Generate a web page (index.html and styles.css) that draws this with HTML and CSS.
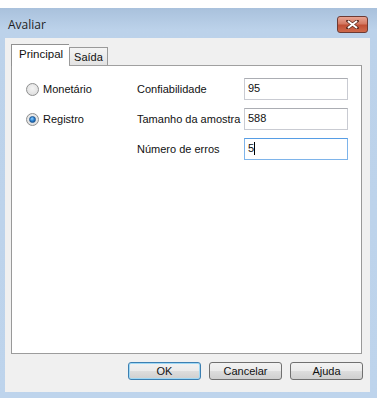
FILE: index.html
```html
<!DOCTYPE html>
<html>
<head>
<meta charset="utf-8">
<link rel="stylesheet" href="styles.css">
</head>
<body>
<div class="window">
  <div class="titlebar">
    <span class="title">Avaliar</span>
    <span class="close"><svg width="13" height="9" viewBox="0 0 13 9"><path d="M2 1 L11 8 M11 1 L2 8" stroke="#5a2a20" stroke-width="3.4" stroke-linecap="square"/><path d="M2 1 L11 8 M11 1 L2 8" stroke="#fff" stroke-width="2"/></svg></span>
  </div>
  <div class="client">
    <div class="tabs">
      <div class="tab active">Principal</div>
      <div class="tab">Saída</div>
    </div>
    <div class="panel">
      <div class="grid">
        <label class="radio"><span class="dot"></span>Monetário</label>
        <span class="lbl">Confiabilidade</span>
        <span class="field">95</span>

        <label class="radio"><span class="dot on"></span>Registro</label>
        <span class="lbl">Tamanho da amostra</span>
        <span class="field">588</span>

        <span></span>
        <span class="lbl">Número de erros</span>
        <span class="field focus"><span class="caret">5</span></span>
      </div>
    </div>
    <div class="buttons">
      <span class="btn default">OK</span>
      <span class="btn">Cancelar</span>
      <span class="btn">Ajuda</span>
    </div>
  </div>
</div>
</body>
</html>
```

FILE: styles.css
```css
html, body {
  margin: 0;
  padding: 0;
  background: #ffffff;
}
body {
  padding-top: 8px;
  font-family: "Liberation Sans", Arial, sans-serif;
  font-size: 11px;
  color: #111;
}
.window {
  width: 377px;
  height: 390px;
  box-sizing: border-box;
  background: linear-gradient(to bottom, #a9c1dc 0px, #bcd2ea 22px, #bed4ec 100%);
  display: flex;
  flex-direction: column;
}
.titlebar {
  height: 30px;
  display: flex;
  align-items: center;
  justify-content: space-between;
  padding: 0 9px 0 8px;
  box-sizing: border-box;
}
.title {
  font-family: "Open Sans", "Liberation Sans", sans-serif;
  font-size: 12px;
  color: #1e1e1e;
  margin-top: 2px;
}
.close {
  width: 31px;
  height: 17px;
  margin-top: 3px;
  box-sizing: border-box;
  border: 1px solid #6d3a33;
  border-radius: 3px;
  background: linear-gradient(to bottom, #e8a493 0%, #d47a63 45%, #c04f35 55%, #cf6a4c 100%);
  display: flex;
  align-items: center;
  justify-content: center;
}
.client {
  margin: 0 7px 6px 5px;
  height: 354px;
  background: #f0f0f0;
  display: flex;
  flex-direction: column;
}
.tabs {
  display: flex;
  align-items: flex-end;
  padding: 6px 0 0 6px;
  height: 27px;
  box-sizing: border-box;
  position: relative;
  z-index: 1;
}
.tab {
  height: 18px;
  box-sizing: border-box;
  border: 1px solid #9a9a9a;
  border-bottom: none;
  background: linear-gradient(to bottom, #f4f4f4, #e3e3e3);
  padding: 3px 4px 0 4px;
  font-size: 11px;
}
.tab.active {
  height: 22px;
  margin-bottom: -1px;
  background: #ffffff;
  padding: 3px 6px 0 7px;
  border-color: #919191;
  border-right: none;
  font-size: 11.5px;
}
.panel {
  margin: 0 8px 0 6px;
  height: 289px;
  box-sizing: border-box;
  background: #ffffff;
  border: 1px solid #999;
  border-top-color: #a0a0a0;
  border-bottom-color: #9c9c9c;
  padding: 12px 0 0 14px;
}
.grid {
  display: grid;
  grid-template-columns: 111px 107px 104px;
  grid-auto-rows: 22px;
  row-gap: 8px;
  align-items: center;
}
.radio {
  display: flex;
  align-items: center;
  gap: 4px;
}
.dot {
  width: 13px;
  height: 13px;
  box-sizing: border-box;
  border-radius: 50%;
  border: 1px solid #8e8f8f;
  background: radial-gradient(circle at 50% 40%, #f4f4f4 0%, #e4e4e4 60%, #d6d6d6 100%);
  display: flex;
  align-items: center;
  justify-content: center;
}
.dot.on::after {
  content: "";
  width: 5px;
  height: 5px;
  border-radius: 50%;
  background: radial-gradient(circle at 40% 35%, #8fd0ff 0%, #2a7fcf 50%, #104a86 100%);
  border: 1px solid #1d5793;
}
.lbl {
  white-space: nowrap;
}
.field {
  height: 22px;
  box-sizing: border-box;
  border: 1px solid #c9cbd2;
  border-top-color: #abadb3;
  padding: 3px 3px 0 3px;
  background: #fff;
}
.field.focus {
  border-color: #7eb4ea;
  border-top-color: #569de5;
}
.caret {
  border-right: 1px solid #000;
  display: inline-block;
  line-height: 13px;
}
.buttons {
  display: flex;
  justify-content: flex-end;
  gap: 8px;
  padding: 8px 7px 0 0;
}
.btn {
  width: 73px;
  height: 18px;
  box-sizing: border-box;
  border: 1px solid #707070;
  border-radius: 3px;
  background: linear-gradient(to bottom, #f2f2f2 0%, #ebebeb 48%, #dddddd 52%, #cfcfcf 100%);
  display: flex;
  align-items: center;
  justify-content: center;
  font-size: 11px;
}
.btn.default {
  border-color: #3c7fb1;
  box-shadow: inset 0 0 0 1px #9fd8f5;
}
```
